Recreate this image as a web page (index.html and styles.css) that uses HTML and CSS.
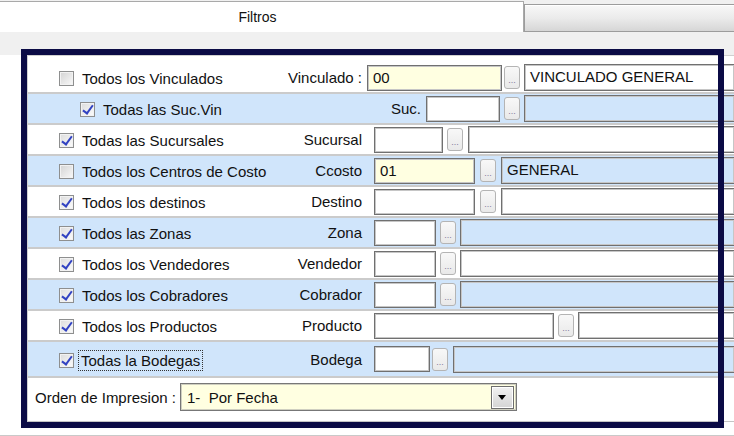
FILE: index.html
```html
<!DOCTYPE html>
<html lang="es">
<head>
    <meta charset="UTF-8">
    <title>Filtros</title>
    <link rel="stylesheet" href="styles.css">
</head>
<body>
    <div class="tabs">
        <div class="tab-on">Filtros</div>
        <div class="tab-off"></div>
    </div>
    <div class="page">
        <div class="panel">
            <div class="row">
                <div class="opt"><span class="chk"></span><span>Todos los Vinculados</span></div>
                <div class="lbl">Vinculado :</div>
                <div class="fld near yel w135">00</div>
                <div class="btn tight">...</div>
                <div class="desc">VINCULADO GENERAL</div>
            </div>
            <div class="row alt">
                <div class="opt sub"><span class="chk on"></span><span>Todas las Suc.Vin</span></div>
                <div class="lbl wide">Suc.</div>
                <div class="fld near w74"></div>
                <div class="btn">...</div>
                <div class="desc"></div>
            </div>
            <div class="row">
                <div class="opt"><span class="chk on"></span><span>Todas las Sucursales</span></div>
                <div class="lbl">Sucursal</div>
                <div class="fld w69"></div>
                <div class="btn">...</div>
                <div class="desc gap5"></div>
            </div>
            <div class="row alt">
                <div class="opt"><span class="chk"></span><span>Todos los Centros de Costo</span></div>
                <div class="lbl">Ccosto</div>
                <div class="fld yel w101">01</div>
                <div class="btn gap5">...</div>
                <div class="desc gap5">GENERAL</div>
            </div>
            <div class="row">
                <div class="opt"><span class="chk on"></span><span>Todos los destinos</span></div>
                <div class="lbl">Destino</div>
                <div class="fld w101"></div>
                <div class="btn gap5">...</div>
                <div class="desc gap5"></div>
            </div>
            <div class="row alt">
                <div class="opt"><span class="chk on"></span><span>Todos las Zonas</span></div>
                <div class="lbl">Zona</div>
                <div class="fld w62"></div>
                <div class="btn">...</div>
                <div class="desc"></div>
            </div>
            <div class="row">
                <div class="opt"><span class="chk on"></span><span>Todos los Vendedores</span></div>
                <div class="lbl">Vendedor</div>
                <div class="fld w62"></div>
                <div class="btn">...</div>
                <div class="desc"></div>
            </div>
            <div class="row alt">
                <div class="opt"><span class="chk on"></span><span>Todos los Cobradores</span></div>
                <div class="lbl">Cobrador</div>
                <div class="fld w62"></div>
                <div class="btn">...</div>
                <div class="desc"></div>
            </div>
            <div class="row">
                <div class="opt"><span class="chk on"></span><span>Todos los Productos</span></div>
                <div class="lbl">Producto</div>
                <div class="fld w180"></div>
                <div class="btn">...</div>
                <div class="desc"></div>
            </div>
            <div class="row alt tall">
                <div class="opt"><span class="chk on"></span><span class="focus">Todas la Bodegas</span></div>
                <div class="lbl">Bodega</div>
                <div class="fld w56"></div>
                <div class="btn tight">...</div>
                <div class="desc gap5"></div>
            </div>
            <div class="orden">
                <div class="orden-lbl">Orden de Impresion :</div>
                <div class="combo">
                    <span>1-&nbsp; Por Fecha</span>
                    <span class="arrow"></span>
                </div>
            </div>
        </div>
    </div>
    <div class="frame"></div>
</body>
</html>
```

FILE: styles.css
```css
* {
    box-sizing: border-box;
}
body {
    margin: 0;
    width: 734px;
    height: 436px;
    overflow: hidden;
    position: relative;
    background: #f0f0f0;
    font-family: "Liberation Sans", Arial, sans-serif;
    font-size: 15px;
    color: #111;
}
.tabs {
    display: flex;
    height: 32px;
}
.tab-on {
    margin-left: -8px;
    margin-top: 1px;
    width: 532px;
    height: 31px;
    border-top: 1px solid #a9a9a9;
    border-right: 1px solid #a9a9a9;
    background: #fff;
    text-align: center;
    line-height: 30px;
    font-size: 14px;
}
.tab-off {
    flex: 1;
    margin-top: 4px;
    height: 28px;
    border: 1px solid #9c9c9c;
    border-right: none;
    background: linear-gradient(#f8f8f8, #ebebeb 50%, #d6d6d6);
    box-shadow: inset 0 1px 0 #fff;
}
.page {
    height: 381px;
    background: #fff;
    border-bottom: 1px solid #c9c9c9;
}
/* the group box runs on past the right edge of the window */
.panel {
    margin: 23px 0 0 27px;
    width: 707px;
    height: 367px;
    padding-top: 7px;
    background: #fff;
    border: 1px solid #d0d0d0;
    border-right: none;
    border-bottom-color: #c4c4c4;
}
.row {
    display: flex;
    align-items: center;
    height: 31px;
    border-bottom: 2px solid #cbcbcb;
}
.row.alt {
    background: #d0e5fb;
}
.row.tall {
    height: 36px;
}
.opt {
    width: 246px;
    display: flex;
    align-items: center;
    padding-left: 31px;
    padding-top: 2px;
}
.opt.sub {
    padding-left: 52px;
}
.chk {
    position: relative;
    flex-shrink: 0;
    width: 15px;
    height: 15px;
    margin-right: 8px;
    border: 1px solid #8e8f8f;
    background: linear-gradient(135deg, #d3d3d3, #f9f9f9);
    box-shadow: inset 0 0 0 1px #f2f2f2;
}
.chk.on {
    background: linear-gradient(135deg, #dcdcdc, #fcfcfc);
}
.chk.on::after {
    content: "";
    position: absolute;
    left: 4px;
    top: 0;
    width: 4px;
    height: 9px;
    border: solid #3142c2;
    border-width: 0 2.5px 2.5px 0;
    transform: rotate(36deg);
}
.focus {
    margin-left: -4px;
    padding: 1px 2px;
    border: 1px dotted #333;
    line-height: 17px;
}
.lbl {
    width: 88px;
    text-align: right;
    flex-shrink: 0;
}
.lbl.wide {
    width: 147px;
}
.fld, .desc {
    height: 26px;
    padding: 0 5px;
    line-height: 24px;
    border: 1px solid #707070;
    box-shadow: inset 0 0 0 1px #c6c6c6;
    white-space: nowrap;
}
.fld {
    flex-shrink: 0;
    margin-left: 12px;
    background: #fff;
}
.fld.near {
    margin-left: 5px;
}
.fld.yel {
    background: #ffffe1;
}
.w135 { width: 135px; }
.w101 { width: 101px; }
.w74 { width: 74px; }
.w69 { width: 69px; }
.w62 { width: 62px; }
.w56 { width: 56px; }
.w180 { width: 180px; }
.desc {
    flex: 1;
    height: 27px;
    margin-left: 4px;
    border-right: none;
}
.btn {
    flex-shrink: 0;
    width: 16px;
    height: 23px;
    margin-left: 4px;
    padding-bottom: 3px;
    border: 1px solid #b4b4b4;
    border-radius: 3px;
    background: linear-gradient(#f8f8f8, #e9e9e9);
    display: flex;
    align-items: flex-end;
    justify-content: center;
    font-size: 9px;
    line-height: 9px;
    color: #85799e;
}
.btn.tight {
    margin-left: 2px;
}
.gap5 {
    margin-left: 5px;
}
.orden {
    display: flex;
    align-items: center;
    height: 38px;
    padding-left: 7px;
}
.orden-lbl {
    width: 145px;
}
.combo {
    width: 337px;
    height: 28px;
    padding-left: 6px;
    display: flex;
    align-items: center;
    background: #ffffe1;
    border: 1px solid #777;
    box-shadow: inset 0 0 0 1px #cfcfc0;
}
.arrow {
    margin-left: auto;
    margin-right: 2px;
    width: 23px;
    height: 23px;
    border: 1px solid #6e6e6e;
    background: linear-gradient(#f2f2f2, #d4d4d4);
    box-shadow: inset 0 0 0 1px #fff;
    position: relative;
}
.arrow::after {
    content: "";
    position: absolute;
    left: 6px;
    top: 8px;
    border-left: 4.5px solid transparent;
    border-right: 4.5px solid transparent;
    border-top: 5px solid #000;
}
.frame {
    position: absolute;
    left: 21px;
    top: 49px;
    width: 703px;
    height: 379px;
    border: 6px solid #0b0b45;
}
```
